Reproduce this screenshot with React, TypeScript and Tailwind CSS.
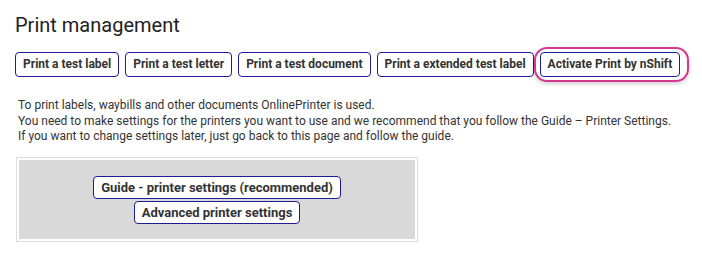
const topButtons = [
  "Print a test label",
  "Print a test letter",
  "Print a test document",
  "Print a extended test label",
];

const btn =
  "relative bg-white border border-[#1c1c94] rounded-[4px] px-[7px] py-[4px] text-[12px] leading-[15px] font-bold text-[#333]";

const App = () => {
  return (
    <div className="min-h-screen bg-white pl-[15px] pt-[13px] font-['Roboto',sans-serif] text-[#222]">
      <h1 className="text-[20px] leading-[24px] font-normal">Print management</h1>

      <div className="mt-[15px] flex gap-[6px]">
        {topButtons.map(label => (
          <button key={label} className={btn}>
            {label}
          </button>
        ))}
        <button className={btn}>
          Activate Print by nShift
          {/* focus ring around the active button */}
          <span className="pointer-events-none absolute -left-[7px] -right-[10px] -top-[6px] -bottom-[6px] rounded-[13px] border-2 border-[#d4378d] shadow-[0_2px_4px_rgba(0,0,0,0.18)]" />
        </button>
      </div>

      <div className="mt-[21px] pl-[3px] text-[12px] leading-[15.5px] text-[#333]">
        <p>To print labels, waybills and other documents OnlinePrinter is used.</p>
        <p>
          You need to make settings for the printers you want to use and we recommend that you follow the Guide – Printer
          Settings.
        </p>
        <p>If you want to change settings later, just go back to this page and follow the guide.</p>
      </div>

      <div className="mt-[12px] ml-[1px] w-[402px] border border-[#dcdcdc] bg-white p-[2px]">
        <div className="flex flex-col items-center gap-[2px] bg-[#d9d9d9] pt-[16px] pb-[15px]">
          <button className={btn.replace("text-[12px]", "text-[13px]").replace("py-[4px]", "py-[3px]")}>
            Guide - printer settings (recommended)
          </button>
          <button className={btn.replace("text-[12px]", "text-[13px]").replace("py-[4px]", "py-[3px]")}>
            Advanced printer settings
          </button>
        </div>
      </div>
    </div>
  );
};

export default App;
